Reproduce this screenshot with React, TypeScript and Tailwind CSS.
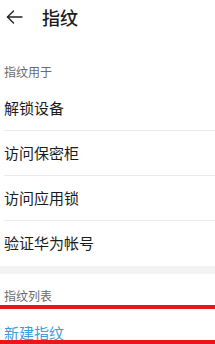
export default function App() {
    const rows = ["解锁设备", "访问保密柜", "访问应用锁", "验证华为帐号"]

    return (
        <div className="w-[215px] h-[344px] overflow-hidden bg-white flex flex-col text-[#1c1c1c]" style={{ fontFamily: '"Noto Sans CJK SC", "Noto Sans", sans-serif' }}>
            <div className="flex items-center h-[33px] pl-[6px]">
                <svg width="17" height="14" viewBox="0 0 17 14" fill="none" stroke="#222" strokeWidth="1.4" strokeLinecap="round" strokeLinejoin="round">
                    <path d="M16 7H1.5" />
                    <path d="M7.5 1L1.5 7l6 6" />
                </svg>
                <span className="ml-[19px] text-[18px] leading-none font-medium">指纹</span>
            </div>
            <div className="h-[31px]" />
            <div className="px-1 text-[12px] leading-[16px] text-[#6b6b6b]">指纹用于</div>
            <div className="h-[6px]" />
            <ul className="flex flex-col">
                {rows.map((r, i) => (
                    <li key={r} className={`h-[45px] flex items-center ml-1 text-[15px] ${i < rows.length - 1 ? "border-b border-[#ebebeb]" : ""}`}>
                        {r}
                    </li>
                ))}
            </ul>
            <div className="h-[8px] bg-[#f3f3f3]" />
            <div className="h-[14px]" />
            <div className="px-1 text-[12px] leading-[16px] text-[#6b6b6b]">指纹列表</div>
            <div className="h-[1px]" />
            <div className="h-[4px] bg-[#e8151b]" />
            <div className="h-[17px]" />
            <div className="px-1 text-[15px] leading-[14px] text-[#3a9fd6]">新建指纹</div>
            <div className="h-[4px] bg-[#e8151b]" />
        </div>
    )
}
